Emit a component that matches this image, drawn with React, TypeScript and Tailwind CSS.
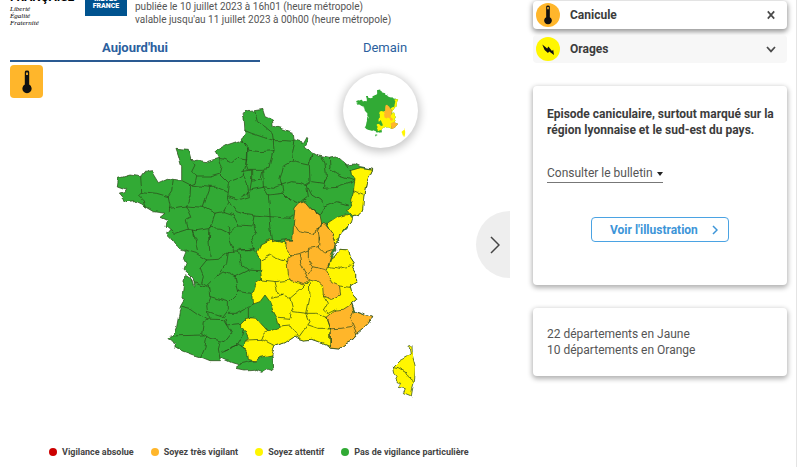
import clsx from 'clsx';
import * as React from 'react';

const legend = [
	{ id: 1, label: 'Vigilance absolue', color: 'bg-[#cc0000]' },
	{ id: 2, label: 'Soyez très vigilant', color: 'bg-[#ffb62b]' },
	{ id: 3, label: 'Soyez attentif', color: 'bg-[#fff600]' },
	{ id: 4, label: 'Pas de vigilance particulière', color: 'bg-[#31aa35]' },
];

const mainland =
	'M400 42 415 35 458 28 465 50 487 60 490 78 515 85 550 98 552 122 578 130 588 112 592 125 585 138 605 155 622 165 640 168 658 172 680 168 700 185 712 195 735 192 752 200 788 208 770 245 762 285 758 300 758 330 748 350 735 345 725 350 720 365 712 385 690 405 690 418 675 430 678 450 662 478 675 468 690 448 715 450 720 470 732 488 725 502 740 525 740 545 720 558 725 580 740 598 725 610 735 635 785 652 775 670 740 700 730 720 700 735 690 747 665 745 655 738 625 725 605 718 580 720 565 715 555 708 530 725 495 738 485 760 492 810 475 805 455 817 430 808 405 810 380 805 382 790 365 785 332 770 328 782 300 782 275 772 250 765 215 752 195 740 195 730 175 718 188 708 200 680 212 615 222 598 216 590 225 522 241 532 252 562 254 560 249 534 230 515 222 508 228 490 220 475 228 455 215 450 195 432 185 415 170 400 180 388 168 378 172 362 150 352 165 340 130 335 105 320 95 312 75 302 45 305 25 282 45 278 50 268 22 258 25 235 60 225 92 230 97 218 125 215 145 248 175 235 215 242 215 200 205 165 198 145 235 148 242 178 290 185 325 175 315 155 350 135 395 120 405 100 402 50Z';

const yellowZones = [
	// Alsace
	'M720 212 752 203 788 208 770 245 762 285 758 330 748 350 735 345 725 348 710 330 725 318 722 300 730 275 735 235 722 225Z',
	// Doubs
	'M650 372 680 352 715 343 725 355 720 372 700 392 692 405 690 415 675 430 668 410 672 400 660 392Z',
	// Massif central, Languedoc, Alpes
	'M440 460 455 430 480 418 520 428 600 480 655 500 662 478 675 468 690 448 715 450 720 470 732 488 725 502 740 525 740 545 720 558 725 580 740 598 725 610 700 640 660 700 660 744 655 738 625 725 605 718 580 720 565 715 555 708 530 725 495 738 485 765 450 772 435 784 415 778 412 752 400 742 408 722 415 715 405 695 395 680 395 670 410 655 435 652 430 605 428 580 438 550 455 540 452 510 452 480Z',
	// Corse
	'M898 738 906 736 907 765 916 800 914 840 908 865 904 888 880 878 886 866 864 862 872 850 858 845 864 832 854 820 850 800 870 780 892 768 900 762Z',
];

const aveyron =
	'M430 612 450 605 465 585 480 605 488 630 500 652 508 682 475 695 452 670 440 655 415 652 415 625Z';

const orangeZones = [
	'M568 310 585 305 602 325 630 345 635 370 645 372 660 392 672 400 668 410 675 430 670 455 662 470 655 495 648 512 655 525 665 548 688 558 692 585 665 598 640 585 638 560 620 545 595 540 580 555 540 540 535 520 530 475 545 465 525 440 525 420 548 420 550 390 550 370 555 325Z',
	'M648 652 675 630 700 628 725 612 732 635 785 652 775 670 740 700 730 720 700 735 690 747 662 744 660 690Z',
];

const borders = [
	{
		id: 'nord-ouest',
		transform: 'translate(0 0)',
		d: 'M92 230 95 275 140 280 175 290 185 275 190 240M95 275 85 285 100 300 105 320M175 290 180 315 178 335M178 325 230 318 240 290 242 255 218 243M242 255 255 250 260 228M242 178 255 195 245 215 262 228 300 228 328 220 333 200 325 175 345 178 365 188 380 175 410 180 412 140 395 120M242 255 300 262 320 262 340 270 355 278 358 250 330 222M358 245 385 235 400 225 410 180M300 262 290 290 280 322 230 318M355 278 352 295 358 305 340 335 315 340 280 322M355 290 385 300 418 290 412 250 400 225M358 305 380 335 410 345M230 318 245 350 225 360 232 388 260 392 300 385 305 370 315 340M232 388 195 400 180 388M250 392 262 420M300 385 298 420M340 335 370 345 385 375 360 400 330 385 302 382M385 375 430 378',
	},
	{
		id: 'nord-est',
		transform: 'translate(390 0)',
		d: 'M45 36 52 65 75 80 97 98 100 122M15 92 35 100 70 112 100 122 135 122 162 124 155 155 158 182 130 198 125 220 120 235 125 255M20 150 60 155 102 152 100 122M10 120 20 150 18 190 25 208 65 208 90 205 102 152M158 185 205 195 215 160M215 165 208 195 210 245 195 255M125 255 155 245 180 248 200 258M245 168 255 190 260 235 250 250 215 245M268 172 270 205 300 225 344 240M310 185 325 205 335 215M255 240 250 265 290 262 340 245M200 255 215 285 240 300 255 320 290 305 325 315M200 258 205 290 185 305M212 325 240 345 255 320M125 255 130 280 150 300 178 310M68 208 70 260 100 265 125 255M70 260 85 285 130 280M5 215 35 210 35 240 30 270 70 262M35 240 60 238 66 212M5 290 30 275M85 285 88 320 90 350 150 355 162 345M10 340 45 345 90 350 92 380 98 425M45 345 40 375 50 400 35 425M160 370 175 395 215 402 240 385 245 370M243 372 235 395 238 420M340 272 365 282',
	},
	{
		id: 'sud-est',
		transform: 'translate(390 390)',
		d: 'M98 35 130 30 158 30M35 35 42 60 0 58M42 62 55 70M238 25 235 50 205 55 205 90 220 110 255 118M235 50 255 70 285 60M155 75 180 70 205 60M178 72 182 100 195 125 205 150M205 135 220 112M62 90 90 75 125 90 142 95M65 150 110 155 150 150M105 155 115 192 150 205 185 175 205 155M150 205 160 245 200 250 230 250 258 262M208 158 210 200 200 250 210 275 190 305 178 322M250 195 262 220 250 240 262 250 285 238M95 205 130 195M155 240 150 265 118 262M118 288 150 285 165 305 175 320M205 285 235 295 265 295M258 262 270 300 270 345M270 110 300 115 330 108M298 168 330 172M260 297 300 295 335 290M340 245 330 265 350 310M20 330 65 328 70 315 85 302M65 328 100 345',
	},
	{
		id: 'sud-ouest',
		transform: 'translate(150 390)',
		d: 'M75 60 108 70 140 90M100 0 112 60M145 0 150 80M140 90 175 88 205 65 240 62 285 55M205 -10 210 30 222 65M140 90 120 115 130 140 125 160 145 170M205 65 200 100 170 140 145 165M235 65 245 105 265 120 300 122M170 140 190 125 225 140 265 120M225 140 235 185 275 190M145 165 150 200 205 215 235 185M62 228 90 235 140 270M95 155 120 165 145 175M150 200 140 225 145 265M145 245 190 260 205 240 205 215M205 250 230 250 265 230M195 265 200 285 245 280M30 318 130 315M145 268 130 275 125 310 150 325 195 335 215 310 190 270ZM140 320 135 350 122 380M180 335 175 360 180 385M195 360 230 345 245 320 250 300M185 365 230 345 260 360M235 402 270 395 290 390',
	},
	{
		id: 'corse',
		transform: 'translate(810 705)',
		d: 'M40 95 55 98 75 110 85 128 100 140',
	},
];

interface IFranceMapProps {
	className?: string;
	detailed?: boolean;
}

const FranceMap: React.FunctionComponent<IFranceMapProps> = ({ className, detailed = false }) => {
	return (
		<svg
			viewBox="0 0 930 900"
			className={className}
			role="img"
			strokeLinejoin="round"
			strokeLinecap="round"
		>
			{detailed && (
				<defs>
					<filter id="coast" x="-5%" y="-5%" width="110%" height="110%">
						<feTurbulence type="fractalNoise" baseFrequency="0.045" numOctaves="1" seed="4" />
						<feDisplacementMap
							in="SourceGraphic"
							scale="17"
							xChannelSelector="R"
							yChannelSelector="G"
						/>
					</filter>
				</defs>
			)}
			<g
				filter={detailed ? 'url(#coast)' : undefined}
				stroke={detailed ? '#2c4a1c' : 'none'}
				strokeWidth="2.2"
			>
				<path d={mainland} fill="#31aa35" />
				{yellowZones.map((d) => (
					<path key={d} d={d} fill="#fff600" />
				))}
				<path d={aveyron} fill="#31aa35" />
				{orangeZones.map((d) => (
					<path key={d} d={d} fill="#ffb62b" />
				))}
				{detailed &&
					borders.map((item) => (
						<path key={item.id} d={item.d} transform={item.transform} fill="none" />
					))}
			</g>
			{!detailed && <path d="M370 850h35v18h-20v14h-15z" fill="#31aa35" />}
		</svg>
	);
};

const Thermometer: React.FunctionComponent<{ className?: string }> = ({ className }) => {
	return (
		<svg viewBox="0 0 24 24" className={className} aria-hidden="true">
			<path
				d="M9.8 2a2.2 1.4 0 0 1 4.4 0v12.6a4.6 4.6 0 1 1-4.4 0z"
				fill="#111"
			/>
			<path d="M11.1 2.4h1.8V5h-1.8z" fill="#ffb62b" />
		</svg>
	);
};

const Header: React.FunctionComponent = () => {
	return (
		<header className="-mt-4 flex h-[46px] items-start">
			<div className="w-[75px] shrink-0">
				<p className="mt-[5px] text-xs leading-4 font-bold text-black">FRANÇAISE</p>
				<p className="mt-px font-['Liberation_Serif',serif] text-[7px] leading-[7px] text-black italic">
					Liberté
					<br />
					Égalité
					<br />
					Fraternité
				</p>
			</div>
			<div className="flex h-8 w-[42px] shrink-0 flex-col items-center justify-end bg-[#00538f] pb-1.5 text-[7px] leading-[7px] font-black text-white">
				<p className="text-center">
					METEO
					<br />
					FRANCE
				</p>
			</div>
			<p className="mt-4 ml-2 text-[10px] leading-[13px] text-[#555]">
				publiée le 10 juillet 2023 à 16h01 (heure métropole)
				<br />
				valable jusqu'au 11 juillet 2023 à 00h00 (heure métropole)
			</p>
		</header>
	);
};

const Tabs: React.FunctionComponent = () => {
	return (
		<nav className="mt-1 grid grid-cols-2 text-[13px] leading-[25px] text-[#2b5f9e]">
			<button type="button" className="border-b-2 border-[#2a5a92] pt-px font-bold">
				Aujourd'hui
			</button>
			<button type="button" className="border-b-2 border-transparent pt-px">
				Demain
			</button>
		</nav>
	);
};

interface IHazardProps {
	label: string;
	open?: boolean;
	children: React.ReactNode;
}

const Hazard: React.FunctionComponent<IHazardProps> = ({ label, open = false, children }) => {
	return (
		<button
			type="button"
			className={clsx(
				'flex h-7 w-full items-center rounded px-[3px] text-left text-xs font-bold text-[#3c3c3c]',
				open ? 'bg-white shadow-[0_2px_5px_1px_rgba(0,0,0,0.4)]' : 'bg-[#f7f7f7]'
			)}
		>
			<span
				className={clsx(
					'flex size-6 items-center justify-center rounded-full',
					open ? 'bg-[#ffb62b]' : 'bg-[#fff600]'
				)}
			>
				{children}
			</span>
			<span className="ml-2.5">{label}</span>
			<svg
				viewBox="0 0 10 10"
				className="mr-2 ml-auto size-2.5"
				fill="none"
				stroke="#4a4a4a"
				strokeWidth="1.7"
			>
				<path d={open ? 'M1.8 1.4 8.2 8.6M8.2 1.4 1.8 8.6' : 'M1 3 5 7.4 9 3'} />
			</svg>
		</button>
	);
};

const App: React.FunctionComponent = () => {
	return (
		<div className="flex min-h-screen overflow-hidden bg-white pr-[3px] font-[Roboto,sans-serif]">
			<main className="min-w-0 flex-1 pl-2.5">
				<Header />
				<Tabs />
				<section className="mt-[3px] flex items-start">
					<button
						type="button"
						aria-label="Canicule"
						className="flex size-[33px] shrink-0 items-center justify-center rounded bg-[#ffb62b]"
					>
						<Thermometer className="size-6" />
					</button>
					<div className="relative mt-[35px] mb-6 ml-[67px] w-[62%]">
						<FranceMap detailed className="block w-full" />
						<div className="absolute -top-[27px] right-0.5 size-[75px] rounded-full bg-white shadow-[0_2px_9px_2px_rgba(0,0,0,0.22)]">
							<FranceMap className="mt-[15px] ml-3 w-[51px]" />
						</div>
					</div>
					<button
						type="button"
						aria-label="Suivant"
						className="ml-auto flex h-[67px] w-[34px] shrink-0 items-center justify-center self-center rounded-l-full bg-[#eee] pl-1"
					>
						<svg
							viewBox="0 0 10 18"
							className="h-[18px] w-2.5"
							fill="none"
							stroke="#444"
							strokeWidth="1.5"
						>
							<path d="M1 1 9 9 1 17" />
						</svg>
					</button>
				</section>
				<ul className="mt-[22px] ml-[39px] flex gap-[17px] text-[9px] leading-3 font-bold whitespace-nowrap text-[#444]">
					{legend.map((item) => (
						<li key={item.id} className="flex items-center gap-[5px]">
							<span className={clsx('size-2 rounded-full', item.color)} />
							{item.label}
						</li>
					))}
				</ul>
			</main>
			<aside className="w-[287px] shrink-0 border-r border-[#e4e4e4] pt-px pr-[9px] pl-[23px]">
				<Hazard label="Canicule" open>
					<Thermometer className="size-5" />
				</Hazard>
				<div className="mt-1.5">
					<Hazard label="Orages">
						<svg viewBox="0 0 24 24" className="size-6" aria-hidden="true">
							<path
								d="M6.3 7.6 11.2 11.4 12.4 9.4 16 14 17.2 12.8 18 18 13.2 14.4 12 16 8.6 13z"
								fill="#111"
							/>
						</svg>
					</Hazard>
				</div>
				<section className="mt-[23px] h-[199px] rounded bg-white pt-5 pr-2 pl-3.5 shadow-[0_2px_5px_1px_rgba(0,0,0,0.3)]">
					<p className="text-xs leading-4 font-bold text-[#3c3c3c]">
						Episode caniculaire, surtout marqué sur la région lyonnaise et le sud-est du pays.
					</p>
					<button
						type="button"
						className="mt-[27px] flex items-center gap-1 border-b border-[#777] text-xs leading-[17px] text-[#555]"
					>
						Consulter le bulletin
						<svg viewBox="0 0 6 4" className="h-1 w-1.5" fill="#222">
							<path d="M0 0h6L3 4z" />
						</svg>
					</button>
					<div className="mt-[34px] flex justify-center pr-1.5">
						<button
							type="button"
							className="flex h-[25px] w-[138px] items-center justify-between rounded border border-[#4ba3e3] pr-2.5 pl-[18px] text-xs font-bold text-[#3d95d8]"
						>
							Voir l'illustration
							<svg
								viewBox="0 0 6 10"
								className="h-2.5 w-1.5"
								fill="none"
								stroke="#3d95d8"
								strokeWidth="1.5"
							>
								<path d="M1 1 5 5 1 9" />
							</svg>
						</button>
					</div>
				</section>
				<section className="mt-[23px] rounded bg-white px-3.5 py-[18px] text-xs leading-4 text-[#555] shadow-[0_2px_5px_1px_rgba(0,0,0,0.3)]">
					<p>22 départements en Jaune</p>
					<p>10 départements en Orange</p>
				</section>
			</aside>
		</div>
	);
};

export default App;
